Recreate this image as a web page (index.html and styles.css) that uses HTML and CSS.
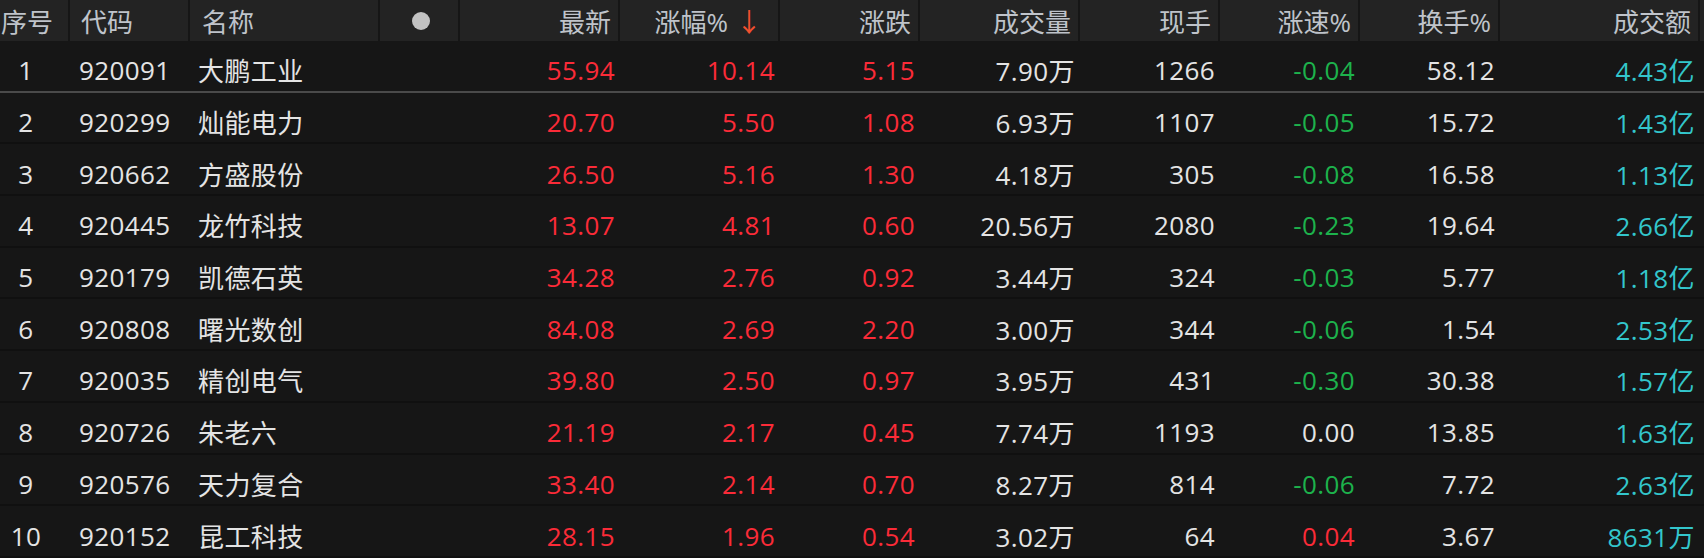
FILE: index.html
```html
<!DOCTYPE html>
<html lang="zh-CN">
<head>
  <meta charset="UTF-8">
  <title>北交所涨幅榜</title>
  <link rel="stylesheet" href="styles.css">
</head>
<body>

<div class="quote-table">
  <div class="row head">
    <div class="cell idx">序号</div>
    <div class="cell code">代码</div>
    <div class="cell name">名称</div>
    <div class="cell dot-col"><span class="dot"></span></div>
    <div class="cell num">最新</div>
    <div class="cell num sorted">涨幅%<span class="arrow">↓</span></div>
    <div class="cell num">涨跌</div>
    <div class="cell num">成交量</div>
    <div class="cell num">现手</div>
    <div class="cell num">涨速%</div>
    <div class="cell num">换手%</div>
    <div class="cell num">成交额</div>
    <div class="cell tail"></div>
  </div>

  <div class="row first">
    <div class="cell idx">1</div><div class="cell code">920091</div><div class="cell name">大鹏工业</div><div class="cell"></div>
    <div class="cell num up">55.94</div><div class="cell num up">10.14</div><div class="cell num up">5.15</div>
    <div class="cell num">7.90万</div><div class="cell num">1266</div><div class="cell num down">-0.04</div>
    <div class="cell num">58.12</div><div class="cell num amt">4.43亿</div><div class="cell"></div>
  </div>
  <div class="row">
    <div class="cell idx">2</div><div class="cell code">920299</div><div class="cell name">灿能电力</div><div class="cell"></div>
    <div class="cell num up">20.70</div><div class="cell num up">5.50</div><div class="cell num up">1.08</div>
    <div class="cell num">6.93万</div><div class="cell num">1107</div><div class="cell num down">-0.05</div>
    <div class="cell num">15.72</div><div class="cell num amt">1.43亿</div><div class="cell"></div>
  </div>
  <div class="row">
    <div class="cell idx">3</div><div class="cell code">920662</div><div class="cell name">方盛股份</div><div class="cell"></div>
    <div class="cell num up">26.50</div><div class="cell num up">5.16</div><div class="cell num up">1.30</div>
    <div class="cell num">4.18万</div><div class="cell num">305</div><div class="cell num down">-0.08</div>
    <div class="cell num">16.58</div><div class="cell num amt">1.13亿</div><div class="cell"></div>
  </div>
  <div class="row">
    <div class="cell idx">4</div><div class="cell code">920445</div><div class="cell name">龙竹科技</div><div class="cell"></div>
    <div class="cell num up">13.07</div><div class="cell num up">4.81</div><div class="cell num up">0.60</div>
    <div class="cell num">20.56万</div><div class="cell num">2080</div><div class="cell num down">-0.23</div>
    <div class="cell num">19.64</div><div class="cell num amt">2.66亿</div><div class="cell"></div>
  </div>
  <div class="row">
    <div class="cell idx">5</div><div class="cell code">920179</div><div class="cell name">凯德石英</div><div class="cell"></div>
    <div class="cell num up">34.28</div><div class="cell num up">2.76</div><div class="cell num up">0.92</div>
    <div class="cell num">3.44万</div><div class="cell num">324</div><div class="cell num down">-0.03</div>
    <div class="cell num">5.77</div><div class="cell num amt">1.18亿</div><div class="cell"></div>
  </div>
  <div class="row">
    <div class="cell idx">6</div><div class="cell code">920808</div><div class="cell name">曙光数创</div><div class="cell"></div>
    <div class="cell num up">84.08</div><div class="cell num up">2.69</div><div class="cell num up">2.20</div>
    <div class="cell num">3.00万</div><div class="cell num">344</div><div class="cell num down">-0.06</div>
    <div class="cell num">1.54</div><div class="cell num amt">2.53亿</div><div class="cell"></div>
  </div>
  <div class="row">
    <div class="cell idx">7</div><div class="cell code">920035</div><div class="cell name">精创电气</div><div class="cell"></div>
    <div class="cell num up">39.80</div><div class="cell num up">2.50</div><div class="cell num up">0.97</div>
    <div class="cell num">3.95万</div><div class="cell num">431</div><div class="cell num down">-0.30</div>
    <div class="cell num">30.38</div><div class="cell num amt">1.57亿</div><div class="cell"></div>
  </div>
  <div class="row">
    <div class="cell idx">8</div><div class="cell code">920726</div><div class="cell name">朱老六</div><div class="cell"></div>
    <div class="cell num up">21.19</div><div class="cell num up">2.17</div><div class="cell num up">0.45</div>
    <div class="cell num">7.74万</div><div class="cell num">1193</div><div class="cell num">0.00</div>
    <div class="cell num">13.85</div><div class="cell num amt">1.63亿</div><div class="cell"></div>
  </div>
  <div class="row">
    <div class="cell idx">9</div><div class="cell code">920576</div><div class="cell name">天力复合</div><div class="cell"></div>
    <div class="cell num up">33.40</div><div class="cell num up">2.14</div><div class="cell num up">0.70</div>
    <div class="cell num">8.27万</div><div class="cell num">814</div><div class="cell num down">-0.06</div>
    <div class="cell num">7.72</div><div class="cell num amt">2.63亿</div><div class="cell"></div>
  </div>
  <div class="row">
    <div class="cell idx">10</div><div class="cell code">920152</div><div class="cell name">昆工科技</div><div class="cell"></div>
    <div class="cell num up">28.15</div><div class="cell num up">1.96</div><div class="cell num up">0.54</div>
    <div class="cell num">3.02万</div><div class="cell num">64</div><div class="cell num up">0.04</div>
    <div class="cell num">3.67</div><div class="cell num amt">8631万</div><div class="cell"></div>
  </div>
</div>

</body>
</html>
```

FILE: styles.css
```css
body {
  margin: 0;
  background: #161616;
  color: #e4e4e4;
  font-family: 'Open Sans', 'Noto Sans CJK SC', sans-serif;
  font-size: 26px;
  overflow: hidden;
}

.quote-table {
  width: 1704px;
}

.row {
  display: grid;
  grid-template-columns: 70px 120px 190px 80px 160px 160px 140px 160px 140px 140px 140px 200px 4px;
  height: 51.7px;
  box-sizing: border-box;
  border-bottom: 2px solid #101010;
}

.row.first {
  border-bottom-color: #4a4a4a;
}

.head {
  height: 41px;
  background: #232323;
  color: #bfc3ca;
  border-bottom: none;
}

.cell {
  display: flex;
  align-items: center;
  white-space: nowrap;
  padding-top: 9px;
  box-sizing: border-box;
  letter-spacing: 0.4px;
}

.head .cell {
  padding-top: 0;
  letter-spacing: 0;
  border-right: 2px solid #161616;
}

.head .cell.tail {
  border-right: none;
}

.idx {
  justify-content: center;
  padding-right: 18px;
}

.head .idx {
  justify-content: flex-start;
  padding: 0 0 0 1px;
}

.code {
  padding-left: 9px;
}

.head .code {
  padding-left: 11px;
}

.name {
  padding-left: 8px;
}

.head .name {
  padding-left: 12px;
}

.dot-col {
  justify-content: center;
}

.dot {
  width: 18px;
  height: 18px;
  border-radius: 50%;
  background: #c2c2c2;
  margin-left: 4px;
}

.num {
  justify-content: flex-end;
  padding-right: 5px;
}

.head .num {
  padding-right: 7px;
}

.head .sorted {
  padding-right: 16px;
}

.arrow {
  color: #f2502f;
  margin-left: 8px;
}

.up {
  color: #fb2b38;
}

.down {
  color: #1db24c;
}

.amt {
  color: #33c6cc;
}
```
